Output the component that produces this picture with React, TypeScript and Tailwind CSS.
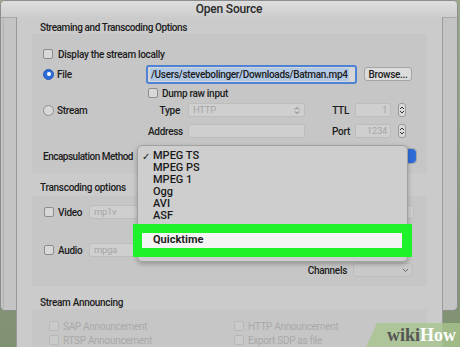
import React from "react";

const font = { fontFamily: 'Roboto, "Liberation Sans", Arial, sans-serif' };

function Check({ disabled = false }: { disabled?: boolean }) {
  return (
    <span
      className={`inline-block w-[10px] h-[10px] rounded-[2px] border shrink-0 ${
        disabled ? "border-[#b8b8b8] bg-[#cacaca]" : "border-[#8e8e8e] bg-[#d8d8d8]"
      }`}
    />
  );
}

function Radio({ on = false }: { on?: boolean }) {
  return on ? (
    <span className="w-[11px] h-[11px] rounded-full bg-[#2f6cd8] border border-[#2458b8] flex items-center justify-center shrink-0">
      <span className="w-[4px] h-[4px] rounded-full bg-white" />
    </span>
  ) : (
    <span className="w-[11px] h-[11px] rounded-full bg-[#d8d8d8] border border-[#8e8e8e] shrink-0" />
  );
}

function Stepper() {
  return (
    <span className="w-[8px] h-[14px] rounded-[3px] border border-[#9a9a9a] bg-[#dadada] flex items-center justify-center shrink-0">
      <svg width="6" height="10" viewBox="0 0 6 10">
        <path d="M1 4 L3 2 L5 4 M1 6 L3 8 L5 6" stroke="#333" strokeWidth="1" fill="none" />
      </svg>
    </span>
  );
}

function Field({ w, text, right = false }: { w: string; text?: string; right?: boolean }) {
  return (
    <span
      className={`${w} h-[14px] bg-[#cfcfcf] border border-[#bdbdbd] rounded-[2px] text-[9.5px] font-normal text-[#a6a6a6] flex items-center px-[3px] ${
        right ? "justify-end" : ""
      }`}
    >
      {text}
    </span>
  );
}

function UpDown() {
  return (
    <svg width="6" height="9" viewBox="0 0 6 9">
      <path d="M1 3.5 L3 1.5 L5 3.5 M1 5.5 L3 7.5 L5 5.5" stroke="#777" strokeWidth="1" fill="none" />
    </svg>
  );
}

function Down() {
  return (
    <svg width="7" height="5" viewBox="0 0 7 5">
      <path d="M1 1 L3.5 3.5 L6 1" stroke="#666" strokeWidth="1" fill="none" />
    </svg>
  );
}

export default function App() {
  return (
    <div className="relative w-[460px] h-[347px] overflow-hidden bg-gradient-to-b from-[#9aa98c] to-[#7f9170] text-[#1c1c1c]" style={font}>
      {/* back window */}
      <div className="absolute left-0 top-0 w-[458px] h-[311px] rounded-[5px] border border-[#8d8d8d] bg-[#c4c4c4] overflow-hidden">
        <div className="h-[17px] bg-gradient-to-b from-[#dedede] to-[#cdcdcd] border-b border-[#a9a9a9] flex items-center justify-center text-[12px] font-medium tracking-[-0.2px] text-[#2a2a2a]">
          Open Source
        </div>
        <div className="ml-[2px] w-[1px] h-[290px] bg-[#b3b3b3]" />
      </div>

      {/* sheet */}
      <div className="absolute left-[16px] top-[17px] w-[427px] h-[335px] bg-[#cbcbcb] border-l border-r border-[#9a9a9a] px-[15px] pt-[5px] text-[10px] font-medium tracking-[-0.3px] whitespace-nowrap">
        <div className="h-[12px] pl-[8px] leading-[12px] tracking-[-0.4px]">Streaming and Transcoding Options</div>
        <div className="h-[139px] bg-[#c6c6c6] pl-[11px] pt-[13px] flex flex-col">
          <div className="h-[14px] flex items-center gap-[5px]">
            <Check />
            <span>Display the stream locally</span>
          </div>
          <div className="h-[20px] mt-[3px] flex items-center">
            <span className="w-[103px] flex items-center gap-[3px]">
              <Radio on />
              <span>File</span>
            </span>
            <span className="w-[211px] h-[19px] rounded-[3px] border-2 border-[#4d82d4] bg-[#d6d6d6] flex items-center px-[2px]">
              <span className="bg-[#b2c9e6] text-[#1a1a1a] leading-[13px] px-[1px]">/Users/stevebolinger/Downloads/Batman.mp4</span>
            </span>
            <span className="ml-[7px] w-[48px] h-[14px] rounded-[3px] border border-[#a5a5a5] bg-[#dcdcdc] flex items-center justify-center">
              Browse...
            </span>
          </div>
          <div className="h-[12px] mt-[3px] flex items-center gap-[4px] pl-[105px]">
            <Check />
            <span>Dump raw input</span>
          </div>
          <div className="h-[16px] mt-[3px] flex items-center">
            <span className="w-[103px] flex items-center gap-[3px]">
              <Radio />
              <span>Stream</span>
            </span>
            <span className="w-[38px] text-right pr-[4px]">Type</span>
            <span className="ml-[4px] w-[117px] h-[14px] bg-[#cfcfcf] border border-[#bdbdbd] rounded-[2px] text-[9.5px] font-normal text-[#a6a6a6] flex items-center justify-between px-[4px]">
              HTTP
              <UpDown />
            </span>
            <span className="w-[50px] text-right pr-[6px]">TTL</span>
            <Field w="w-[36px]" text="1" right />
            <span className="ml-[7px]">
              <Stepper />
            </span>
          </div>
          <div className="h-[16px] mt-[5px] flex items-center">
            <span className="w-[103px]" />
            <span className="w-[38px] pl-[2px]">Address</span>
            <span className="ml-[4px]">
              <Field w="w-[117px]" />
            </span>
            <span className="w-[50px] text-right pr-[5px]">Port</span>
            <Field w="w-[36px]" text="1234" right />
            <span className="ml-[7px]">
              <Stepper />
            </span>
          </div>
          <div className="h-[16px] mt-[9px] flex items-center">
            <span className="w-[97px] tracking-[-0.5px]">Encapsulation Method</span>
            <span className="w-[277px] h-[16px] rounded-[4px] bg-[#d4d4d4] border border-[#a5a5a5] flex justify-end">
              <span className="w-[10px] h-full rounded-r-[4px] bg-[#2f6cd8]" />
            </span>
          </div>
        </div>

        <div className="h-[23px] pl-[8px] pt-[9px] leading-[12px]">Transcoding options</div>
        <div className="h-[90px] bg-[#c6c6c6] pl-[12px] pt-[9px] flex flex-col">
          <div className="h-[14px] flex items-center">
            <Check />
            <span className="ml-[4px] w-[31px]">Video</span>
            <span className="w-[325px] h-[14px] bg-[#cfcfcf] border border-[#bdbdbd] rounded-[3px] text-[9.5px] font-normal text-[#a6a6a6] flex items-center justify-between px-[4px]">
              mp1v
              <Down />
            </span>
          </div>
          <div className="h-[14px] mt-[24px] flex items-center">
            <Check />
            <span className="ml-[4px] w-[31px]">Audio</span>
            <span className="w-[320px] h-[14px] bg-[#cfcfcf] border border-[#bdbdbd] rounded-[3px] text-[9.5px] font-normal text-[#a6a6a6] flex items-center px-[4px]">
              mpga
            </span>
          </div>
          <div className="h-[14px] mt-[6px] flex items-center justify-end pr-[14px]">
            <span className="mr-[6px]">Channels</span>
            <span className="w-[60px] h-[14px] bg-[#c9c9c9] border border-[#bdbdbd] rounded-[3px] flex items-center justify-end px-[3px]">
              <Down />
            </span>
          </div>
        </div>

        <div className="h-[23px] pl-[8px] pt-[11px] leading-[12px]">Stream Announcing</div>
        <div className="h-[60px] bg-[#c6c6c6] pl-[17px] pt-[11px] text-[#a9a9a9] font-normal grid grid-cols-[185px_1fr] gap-y-[2px] auto-rows-[12px]">
          <div className="flex items-center gap-[4px]">
            <Check disabled />
            <span>SAP Announcement</span>
          </div>
          <div className="flex items-center gap-[4px]">
            <Check disabled />
            <span>HTTP Announcement</span>
          </div>
          <div className="flex items-center gap-[4px]">
            <Check disabled />
            <span>RTSP Announcement</span>
          </div>
          <div className="flex items-center gap-[4px]">
            <Check disabled />
            <span>Export SDP as file</span>
          </div>
        </div>
      </div>

      {/* popup menu */}
      <div className="absolute left-[137px] top-[145px] w-[271px] h-[117px] rounded-[5px] bg-[#cecece] border border-[#a2a2a2] shadow-[0_2px_5px_rgba(0,0,0,0.25)] pt-[4px] text-[11px] font-medium text-[#1a1a1a]">
        {["MPEG TS", "MPEG PS", "MPEG 1", "Ogg", "AVI", "ASF"].map((t, i) => (
          <div key={t} className="h-[12px] flex items-center">
            <span className="w-[15px] text-center text-[10px]">{i === 0 ? "✓" : ""}</span>
            <span>{t}</span>
          </div>
        ))}
      </div>
      {/* highlight */}
      <div className="absolute left-[133px] top-[224px] w-[279px] h-[33px] bg-[#1ef22b] p-[9px] pr-[10px]">
        <div className="h-[15px] bg-[#f4f4f4] flex items-center pl-[11px] text-[11px] font-bold text-[#1f1f1f]">
          Quicktime
        </div>
      </div>

      {/* watermark */}
      <div
        className="absolute left-[366px] top-[323px] w-[94px] h-[24px] bg-[#a6c48c]/80 flex items-center pl-[21px] text-[18px] font-bold leading-none"
        style={{ clipPath: "polygon(11px 0, 100% 0, 100% 100%, 0 100%)", fontFamily: '"Liberation Serif", "Times New Roman", serif' }}
      >
        <span className="text-[#555]">wiki</span>
        <span className="text-white">How</span>
      </div>
    </div>
  );
}
